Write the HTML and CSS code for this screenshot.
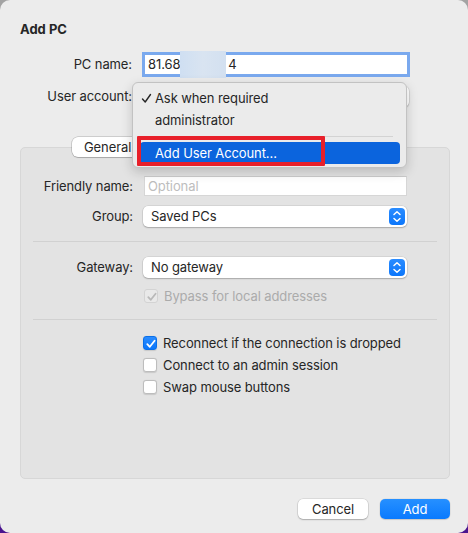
FILE: index.html
```html
<!DOCTYPE html>
<html>
<head>
<meta charset="utf-8">
<link rel="stylesheet" href="styles.css">
</head>
<body>
<div class="window">
  <div class="title">Add PC</div>

  <div class="form-top">
    <div class="label">PC name:</div>
    <div class="ctl">
      <div class="textfield focused"><span>81.68</span><span class="blur"></span><span>4</span></div>
    </div>
    <div class="label">User account:</div>
    <div class="ctl">
      <div class="popup wide"><span></span><span class="stepper"><svg width="16" height="17" viewBox="0 0 16 17"><path d="M5 6.5 L8 3.8 L11 6.5 M5 10.5 L8 13.2 L11 10.5" fill="none" stroke="#fff" stroke-width="1.5" stroke-linecap="round" stroke-linejoin="round"/></svg></span></div>
    </div>
  </div>

  <div class="tabs">
    <div class="seg">
      <div class="segitem selected">General</div>
      <div class="segitem blank w1"></div>
      <div class="segitem blank w2"></div>
      <div class="segitem blank w3"></div>
    </div>
  </div>

  <div class="panel">
    <div class="rows rows-a">
      <div class="label">Friendly name:</div>
      <div class="ctl"><div class="textfield plain"><span class="placeholder">Optional</span></div></div>
      <div class="label">Group:</div>
      <div class="ctl">
        <div class="popup"><span>Saved PCs</span><span class="stepper"><svg width="16" height="17" viewBox="0 0 16 17"><path d="M5 6.5 L8 3.8 L11 6.5 M5 10.5 L8 13.2 L11 10.5" fill="none" stroke="#fff" stroke-width="1.5" stroke-linecap="round" stroke-linejoin="round"/></svg></span></div>
      </div>
    </div>
    <div class="sep"></div>
    <div class="rows rows-b">
      <div class="label">Gateway:</div>
      <div class="ctl">
        <div class="popup"><span>No gateway</span><span class="stepper"><svg width="16" height="17" viewBox="0 0 16 17"><path d="M5 6.5 L8 3.8 L11 6.5 M5 10.5 L8 13.2 L11 10.5" fill="none" stroke="#fff" stroke-width="1.5" stroke-linecap="round" stroke-linejoin="round"/></svg></span></div>
      </div>
      <div class="label"></div>
      <div class="ctl">
        <div class="check disabled"><span class="box"><svg width="14" height="14" viewBox="0 0 14 14"><path d="M3.3 7.2 L5.8 9.8 L10.6 3.8" fill="none" stroke="#b9b9b9" stroke-width="1.8" stroke-linecap="round" stroke-linejoin="round"/></svg></span><span>Bypass for local addresses</span></div>
      </div>
    </div>
    <div class="sep sep2"></div>
    <div class="checks">
      <div class="check"><span class="box on"><svg width="14" height="14" viewBox="0 0 14 14"><path d="M3.3 7.2 L5.8 9.8 L10.6 3.8" fill="none" stroke="#fff" stroke-width="1.8" stroke-linecap="round" stroke-linejoin="round"/></svg></span><span>Reconnect if the connection is dropped</span></div>
      <div class="check"><span class="box"></span><span>Connect to an admin session</span></div>
      <div class="check"><span class="box"></span><span>Swap mouse buttons</span></div>
    </div>
  </div>

  <div class="buttons">
    <div class="btn cancel">Cancel</div>
    <div class="btn primary">Add</div>
  </div>

  <div class="menu">
    <div class="mitem"><svg class="tick" width="11" height="11" viewBox="0 0 11 11"><path d="M1.5 6 L4.2 9 L9.5 1.5" fill="none" stroke="#262626" stroke-width="1.4" stroke-linecap="round" stroke-linejoin="round"/></svg>Ask when required</div>
    <div class="mitem">administrator</div>
    <div class="msep"></div>
    <div class="mitem hl">Add User Account...</div>
  </div>
  <div class="redbox"></div>
</div>
</body>
</html>
```

FILE: styles.css
```css
html, body {
  margin: 0;
  padding: 0;
}
body {
  width: 468px;
  height: 533px;
  background: linear-gradient(#a3a3a3 0, #a3a3a3 50%, #4a148e 50%, #4a148e 100%);
  font-family: Inter, "Liberation Sans", sans-serif;
  font-size: 13px;
  letter-spacing: -0.1px;
  color: #262626;
  overflow: hidden;
}
.window {
  position: relative;
  width: 468px;
  height: 533px;
  box-sizing: border-box;
  background: #ececec;
  border-radius: 10px;
  padding: 21px 18px 0 20px;
}
.title {
  font-weight: 700;
  line-height: 16px;
  height: 16px;
  margin-bottom: 16px;
  letter-spacing: 0;
}
.form-top {
  display: grid;
  grid-template-columns: 112px 1fr;
  column-gap: 10px;
  row-gap: 10px;
}
.label {
  text-align: right;
  line-height: 22px;
  height: 22px;
  white-space: nowrap;
}
.ctl {
  height: 22px;
  display: flex;
  align-items: center;
}
.textfield {
  box-sizing: border-box;
  height: 19px;
  background: #fff;
  display: flex;
  align-items: center;
  padding-left: 3px;
  line-height: 19px;
  white-space: nowrap;
}
.textfield.focused {
  margin-left: 3px;
  width: 262px;
  box-shadow: 0 0 0 3px #7aa9ee;
}
.blur {
  display: inline-block;
  width: 46px;
  height: 27px;
  margin: 0 2px 0 0;
  background: linear-gradient(90deg, #cfdff2, #d9e4f1 50%, #d3e0f0);
  filter: blur(0.6px);
}
.textfield.plain {
  width: 263px;
  height: 20px;
  margin-left: 1px;
  border: 1px solid #d6d6d6;
  border-top-color: #cbcbcb;
  background: #fff;
}
.placeholder {
  color: #bdbdbd;
}
.popup {
  box-sizing: border-box;
  width: 264px;
  height: 21px;
  background: #fff;
  border-radius: 5px;
  box-shadow: 0 0 0 0.5px rgba(0, 0, 0, 0.12), 0 1px 1.5px rgba(0, 0, 0, 0.22);
  display: flex;
  align-items: center;
  justify-content: space-between;
  padding: 0 2px 0 8px;
}
.popup.wide {
  width: 267px;
}
.stepper {
  width: 16px;
  height: 17px;
  border-radius: 4px;
  background: linear-gradient(#2a8cff, #0b76fb);
  display: block;
}
.stepper svg {
  display: block;
}
.tabs {
  margin-top: 30px;
  height: 20px;
  display: flex;
  margin-left: 52px;
  position: relative;
  z-index: 1;
}
.seg {
  display: flex;
  height: 20px;
  background: #dcdcdc;
  border-radius: 6px;
  box-shadow: 0 0 0 0.5px rgba(0, 0, 0, 0.12);
}
.segitem {
  line-height: 20px;
  padding: 0 12px;
  white-space: nowrap;
}
.segitem.w1 { width: 40px; }
.segitem.w2 { width: 90px; }
.segitem.w3 { width: 40px; }
.segitem.selected {
  background: #fff;
  border-radius: 6px;
  box-shadow: 0 0 0 0.5px rgba(0, 0, 0, 0.15), 0 1px 1px rgba(0, 0, 0, 0.15);
}
.panel {
  box-sizing: border-box;
  margin-top: -10px;
  width: 430px;
  height: 332px;
  background: #e3e3e3;
  border: 1px solid #d7d7d7;
  border-radius: 5px;
  padding-top: 27px;
}
.rows {
  display: grid;
  grid-template-columns: 112px 1fr;
  column-gap: 10px;
}
.rows-a {
  row-gap: 8px;
}
.rows-b {
  row-gap: 7px;
}
.sep {
  height: 1px;
  background: #d1d1d1;
  margin: 14px 12px 14px 12px;
}
.sep2 {
  margin: 12px 12px 12px 12px;
}
.check {
  display: flex;
  align-items: center;
  gap: 6px;
  height: 22px;
  white-space: nowrap;
}
.check .box {
  box-sizing: border-box;
  width: 14px;
  height: 14px;
  border-radius: 3px;
  background: #fff;
  border: 0.5px solid #bdbdbd;
  box-shadow: 0 0.5px 1px rgba(0, 0, 0, 0.12);
  display: block;
}
.check .box svg {
  display: block;
  margin: -0.5px;
}
.check .box.on {
  background: linear-gradient(#2a8cff, #0b76fb);
  border-color: #0a6fe8;
}
.check.disabled {
  color: #ababab;
}
.check.disabled .box {
  background: #e9e9e9;
  border-color: #d3d3d3;
  box-shadow: none;
  margin-left: 1px;
}
.checks {
  padding-left: 122px;
}
.buttons {
  display: flex;
  justify-content: flex-end;
  gap: 12px;
  margin-top: 20px;
}
.btn {
  width: 70px;
  height: 20px;
  line-height: 20px;
  text-align: center;
  border-radius: 5px;
}
.btn.cancel {
  background: #fff;
  box-shadow: 0 0 0 0.5px rgba(0, 0, 0, 0.14), 0 1px 1.5px rgba(0, 0, 0, 0.22);
}
.btn.primary {
  color: #fff;
  background: linear-gradient(#2690ff, #0a7afe);
  box-shadow: 0 0 0 0.5px rgba(0, 0, 0, 0.08), 0 1px 1px rgba(0, 0, 0, 0.12);
}
.menu {
  position: absolute;
  left: 132px;
  top: 82px;
  width: 275px;
  height: 86px;
  box-sizing: border-box;
  background: #ebebeb;
  border: 1px solid #c2c2c2;
  border-radius: 6px;
  box-shadow: 0 4px 12px rgba(0, 0, 0, 0.18);
  padding: 4px 6px 4px 7px;
  z-index: 5;
}
.mitem {
  position: relative;
  height: 22px;
  line-height: 22px;
  padding-left: 15px;
  border-radius: 4px;
}
.tick {
  position: absolute;
  left: 1px;
  top: 6px;
}
.msep {
  height: 1px;
  background: #d3d3d3;
  margin: 5px 7px 5px 0;
}
.mitem.hl {
  background: #0b64dd;
  color: #fff;
}
.redbox {
  position: absolute;
  left: 137px;
  top: 136px;
  width: 188px;
  height: 30px;
  box-sizing: border-box;
  border: 4px solid #e8202a;
  border-radius: 1px;
  z-index: 6;
}
```
